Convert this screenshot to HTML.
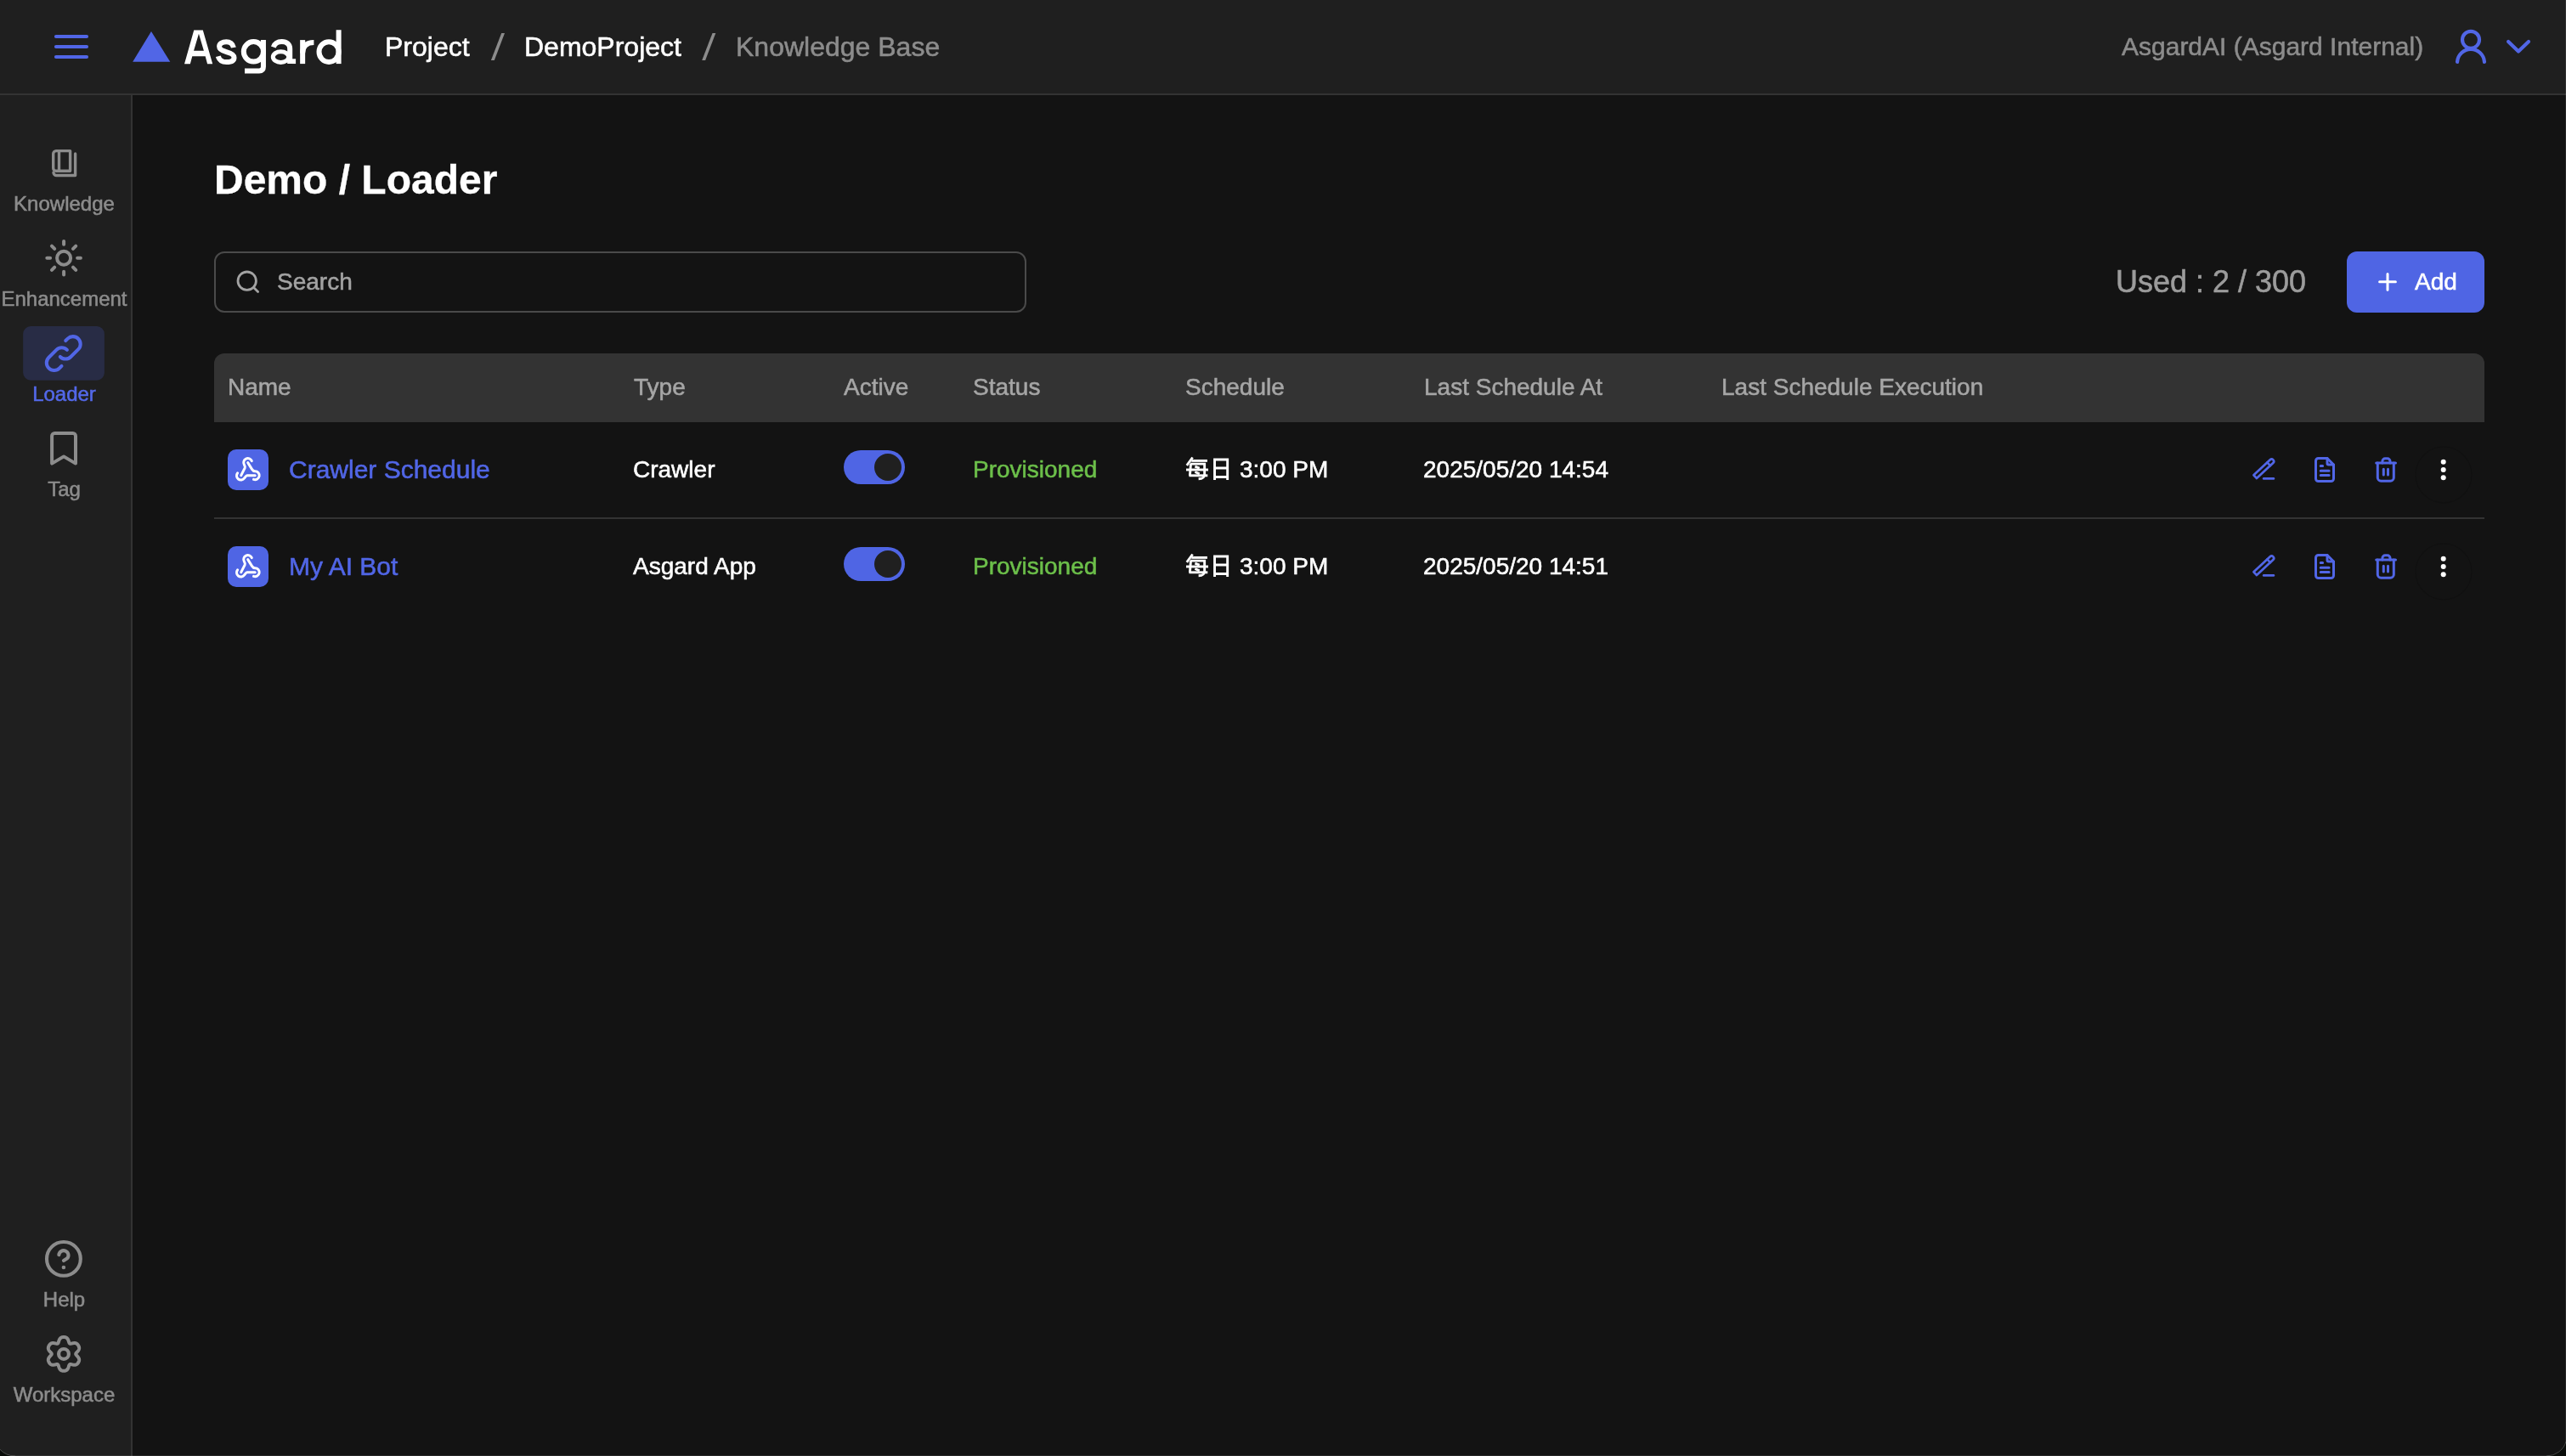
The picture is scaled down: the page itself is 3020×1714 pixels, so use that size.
<!DOCTYPE html>
<html>
<head>
<meta charset="utf-8">
<style>
html,body{margin:0;padding:0;}
body{width:3020px;height:1714px;position:relative;overflow:hidden;background:#131313;font-family:"Liberation Sans",sans-serif;}
.t{position:absolute;white-space:pre;line-height:1;will-change:transform;-webkit-text-stroke-width:0.55px;}
#hdr{position:absolute;left:0;top:0;width:3020px;height:110px;background:#1f1f1f;border-bottom:2px solid #333;}
#side{position:absolute;left:0;top:112px;width:154px;height:1602px;background:#1f1f1f;border-right:2px solid #333;}
#ic{position:absolute;left:0;top:0;width:3020px;height:1714px;}
</style>
</head>
<body>
<div id="hdr"></div>
<div id="side"></div>

<!-- header text -->
<div class="t" style="left:453px;top:39px;font-size:32px;color:#fff;">Project</div>
<div class="t" style="left:617px;top:39px;font-size:32px;color:#fff;">DemoProject</div>
<div class="t" style="left:866px;top:39px;font-size:32px;color:#8c8c8c;">Knowledge Base</div>
<div class="t" style="left:2497px;top:40px;font-size:30px;color:#8c8c8c;">AsgardAI (Asgard Internal)</div>

<!-- sidebar labels -->
<div class="t" style="left:0;width:151px;text-align:center;top:228px;font-size:24px;color:#8c8c8c;">Knowledge</div>
<div class="t" style="left:0;width:151px;text-align:center;top:340px;font-size:24px;color:#8c8c8c;">Enhancement</div>
<div class="t" style="left:0;width:151px;text-align:center;top:452px;font-size:24px;color:#5368e8;">Loader</div>
<div class="t" style="left:0;width:151px;text-align:center;top:564px;font-size:24px;color:#8c8c8c;">Tag</div>
<div class="t" style="left:0;width:151px;text-align:center;top:1518px;font-size:24px;color:#8c8c8c;">Help</div>
<div class="t" style="left:0;width:151px;text-align:center;top:1630px;font-size:24px;color:#8c8c8c;">Workspace</div>

<!-- main -->
<div class="t" style="left:252px;top:188px;font-size:48px;font-weight:700;color:#fff;-webkit-text-stroke-width:0.3px;">Demo / Loader</div>
<div style="position:absolute;left:252px;top:296px;width:952px;height:68px;border:2px solid #4a4a4a;border-radius:12px;"></div>
<div class="t" style="left:326px;top:318px;font-size:28px;color:#a3a3a3;">Search</div>
<div class="t" style="left:2490px;top:314px;font-size:36px;color:#9c9c9c;">Used : 2 / 300</div>
<div style="position:absolute;left:2762px;top:296px;width:162px;height:72px;background:#4f65e4;border-radius:12px;"></div>
<div class="t" style="left:2842px;top:318px;font-size:28px;color:#fff;">Add</div>

<!-- table header -->
<div style="position:absolute;left:252px;top:416px;width:2672px;height:81px;background:#333;border-radius:12px 12px 0 0;"></div>
<div class="t" style="left:268px;top:442px;font-size:28px;color:#a6a6a6;">Name</div>
<div class="t" style="left:746px;top:442px;font-size:28px;color:#a6a6a6;">Type</div>
<div class="t" style="left:993px;top:442px;font-size:28px;color:#a6a6a6;">Active</div>
<div class="t" style="left:1145px;top:442px;font-size:28px;color:#a6a6a6;">Status</div>
<div class="t" style="left:1395px;top:442px;font-size:28px;color:#a6a6a6;">Schedule</div>
<div class="t" style="left:1676px;top:442px;font-size:28px;color:#a6a6a6;">Last Schedule At</div>
<div class="t" style="left:2026px;top:442px;font-size:28px;color:#a6a6a6;">Last Schedule Execution</div>
<div style="position:absolute;left:252px;top:609px;width:2672px;height:2px;background:#333;"></div>

<!-- row 1 -->
<div style="position:absolute;left:268px;top:529px;width:48px;height:48px;background:#4f65e4;border-radius:10px;"></div>
<div class="t" style="left:340px;top:538px;font-size:30px;color:#5166e6;">Crawler Schedule</div>
<div class="t" style="left:745px;top:539px;font-size:28px;color:#fff;">Crawler</div>
<div style="position:absolute;left:993px;top:530px;width:72px;height:40px;background:#4f65e4;border-radius:20px;"></div>
<div style="position:absolute;left:1029px;top:534px;width:32px;height:32px;background:#202020;border-radius:16px;"></div>
<div class="t" style="left:1145px;top:539px;font-size:28px;color:#6cbf4a;">Provisioned</div>
<div class="t" style="left:1459px;top:539px;font-size:28px;color:#fff;">3:00 PM</div>
<div class="t" style="left:1675px;top:539px;font-size:28px;color:#fff;">2025/05/20 14:54</div>

<!-- row 2 -->
<div style="position:absolute;left:268px;top:643px;width:48px;height:48px;background:#4f65e4;border-radius:10px;"></div>
<div class="t" style="left:340px;top:652px;font-size:30px;color:#5166e6;">My AI Bot</div>
<div class="t" style="left:745px;top:653px;font-size:28px;color:#fff;">Asgard App</div>
<div style="position:absolute;left:993px;top:644px;width:72px;height:40px;background:#4f65e4;border-radius:20px;"></div>
<div style="position:absolute;left:1029px;top:648px;width:32px;height:32px;background:#202020;border-radius:16px;"></div>
<div class="t" style="left:1145px;top:653px;font-size:28px;color:#6cbf4a;">Provisioned</div>
<div class="t" style="left:1459px;top:653px;font-size:28px;color:#fff;">3:00 PM</div>
<div class="t" style="left:1675px;top:653px;font-size:28px;color:#fff;">2025/05/20 14:51</div>

<svg id="ic" width="3020" height="1714" viewBox="0 0 3020 1714" fill="none" stroke-linecap="round" stroke-linejoin="round">

<path d="M590.2 39.1H594L581.8 70.9H577.9Z" fill="#8c8c8c"/>
<path d="M838.5 39.1H842.3L830.1 70.9H826.2Z" fill="#8c8c8c"/>
<!-- logo text -->
<g fill="#fff">
<path fill-rule="evenodd" d="M217.03 75.26L228.25 35.47H238.8L250.23 75.26H244.07L241.66 66.25H226.27L223.85 75.26ZM233.96 39.65L228.03 59.66H239.9Z"/>
<rect x="344" y="69.3" width="4.1" height="5.75"/>
</g>
<g stroke="#fff" stroke-width="6" fill="none" stroke-linecap="butt" stroke-linejoin="round">
<path d="M274.9 56C274 51.5 270.5 49.2 266.4 49.2C261.5 49.2 258.1 51.6 258.1 54.8C258.1 58.6 261.8 59.9 266.4 61.1C271.8 62.5 275.5 64 275.5 67.8C275.5 71.5 271.6 73.1 266.6 73.1C261.6 73.1 258 70.6 256.8 66.2"/>
<ellipse cx="298.4" cy="60.85" rx="11.6" ry="11.75"/>
<path d="M309.95 47.1V78.5Q309.95 83.4 305 83.4H288"/>
<path d="M321.8 55.6C323.3 51.3 327 49.1 331.6 49.1C337.6 49.1 341.2 52.3 341.2 57.6V75.1"/>
<ellipse cx="330.5" cy="67.1" rx="9.2" ry="6.3" stroke-width="5"/>
<path d="M356.15 75.1V47.1"/>
<path d="M356.15 62.5C356.15 54.5 360.5 50 369.4 50" />
<ellipse cx="387.05" cy="61.07" rx="11.55" ry="11.9"/>
<path d="M398.6 35.25V75.1"/>
</g>
<!-- hamburger -->
<g stroke="#5166e6" stroke-width="4.2">
<path d="M66 43H102M66 55H102M66 67H102"/>
</g>
<!-- logo triangle -->
<path d="M178 37L200.3 72.8H156.2Z" fill="#5166e6"/>
<!-- user -->
<g stroke="#5166e6" stroke-width="4.2">
<circle cx="2908" cy="46.8" r="10"/>
<path d="M2892 73A16.03 16.03 0 0 1 2924 73"/>
<path d="M2952.1 48.9L2964 60.5L2976 48.9"/>
</g>
<!-- sidebar: book -->
<g stroke="#8c8c8c" stroke-width="3.4">
<path d="M66 177.6H82.6V201.3H66A3.3 3.3 0 0 1 62.7 198V181A3.4 3.4 0 0 1 66 177.6Z"/>
<path d="M69.5 177.6V201.3"/>
<path d="M88.6 181V206.5H66.5A3.5 3.5 0 0 1 63 203"/>
</g>
<!-- sun -->
<g stroke="#8c8c8c" stroke-width="4">
<circle cx="75.1" cy="303.8" r="8"/>
<path d="M91.10 303.80L94.90 303.80M85.99 314.69L89.24 317.94M75.10 319.80L75.10 323.60M64.21 314.69L60.96 317.94M59.10 303.80L55.30 303.80M64.21 292.91L60.96 289.66M75.10 287.80L75.10 284.00M85.99 292.91L89.24 289.66"/>
</g>
<!-- loader highlight -->
<rect x="27.2" y="384" width="95.7" height="63.7" rx="9" fill="#282c45"/>
<g transform="translate(48.25 389.35) scale(2.217)" stroke="#5166e6" stroke-width="1.82" fill="none"><path d="M13.828 10.172a4 4 0 0 0-5.656 0l-4 4a4 4 0 1 0 5.656 5.656l1.102-1.101m-.758-4.899a4 4 0 0 0 5.656 0l4-4a4 4 0 0 0-5.656-5.656l-1.1 1.1"/></g>
<!-- bookmark -->
<path d="M61.1 545.6V513.3A3.3 3.3 0 0 1 64.4 510H85.7A3.3 3.3 0 0 1 89 513.3V545.6L75.05 537.4Z" stroke="#8c8c8c" stroke-width="4" stroke-linejoin="round"/>
<!-- help -->
<g stroke="#8c8c8c" stroke-width="4.1">
<circle cx="74.9" cy="1481.9" r="19.9"/>
<path d="M69.32 1477.2A5.6 5.6 0 1 1 79.19 1481.3L74.9 1484"/>
</g>
<circle cx="74.9" cy="1492" r="2.3" fill="#8c8c8c"/>
<!-- gear -->
<g stroke="#8c8c8c" stroke-width="4">
<circle cx="75" cy="1593.9" r="5.9" stroke-width="4.2"/>
<path id="gearp" d="M89.20 1593.90 L89.23 1594.15 L89.30 1594.40 L89.43 1594.66 L89.60 1594.92 L89.81 1595.20 L90.06 1595.48 L90.33 1595.78 L90.62 1596.10 L90.92 1596.42 L91.23 1596.76 L91.53 1597.11 L91.82 1597.48 L92.10 1597.85 L92.35 1598.23 L92.57 1598.61 L92.76 1598.99 L92.91 1599.38 L93.03 1599.76 L93.12 1600.14 L93.16 1600.51 L93.18 1600.88 L93.16 1601.24 L93.11 1601.59 L93.04 1601.93 L92.95 1602.27 L92.83 1602.60 L92.70 1602.92 L92.56 1603.24 L92.40 1603.55 L92.23 1603.85 L92.05 1604.15 L91.87 1604.44 L91.66 1604.72 L91.45 1605.00 L91.22 1605.26 L90.98 1605.51 L90.72 1605.74 L90.43 1605.96 L90.13 1606.15 L89.81 1606.33 L89.46 1606.47 L89.09 1606.59 L88.70 1606.68 L88.29 1606.73 L87.86 1606.76 L87.42 1606.76 L86.97 1606.73 L86.51 1606.68 L86.05 1606.61 L85.59 1606.52 L85.15 1606.43 L84.71 1606.33 L84.29 1606.23 L83.90 1606.15 L83.53 1606.08 L83.18 1606.03 L82.87 1606.02 L82.58 1606.04 L82.33 1606.10 L82.10 1606.20 L81.90 1606.34 L81.72 1606.54 L81.56 1606.77 L81.42 1607.05 L81.28 1607.37 L81.16 1607.73 L81.03 1608.11 L80.91 1608.52 L80.78 1608.95 L80.64 1609.39 L80.48 1609.82 L80.32 1610.26 L80.13 1610.68 L79.93 1611.09 L79.71 1611.47 L79.47 1611.83 L79.21 1612.15 L78.94 1612.45 L78.66 1612.71 L78.36 1612.94 L78.05 1613.13 L77.73 1613.30 L77.40 1613.43 L77.06 1613.54 L76.73 1613.63 L76.38 1613.69 L76.04 1613.74 L75.69 1613.77 L75.35 1613.79 L75.00 1613.80 L74.65 1613.79 L74.31 1613.77 L73.96 1613.74 L73.62 1613.69 L73.27 1613.63 L72.94 1613.54 L72.60 1613.43 L72.27 1613.30 L71.95 1613.13 L71.64 1612.94 L71.34 1612.71 L71.06 1612.45 L70.79 1612.15 L70.53 1611.83 L70.29 1611.47 L70.07 1611.09 L69.87 1610.68 L69.68 1610.26 L69.52 1609.82 L69.36 1609.39 L69.22 1608.95 L69.09 1608.52 L68.97 1608.11 L68.84 1607.73 L68.72 1607.37 L68.58 1607.05 L68.44 1606.77 L68.28 1606.54 L68.10 1606.34 L67.90 1606.20 L67.67 1606.10 L67.42 1606.04 L67.13 1606.02 L66.82 1606.03 L66.47 1606.08 L66.10 1606.15 L65.71 1606.23 L65.29 1606.33 L64.85 1606.43 L64.41 1606.52 L63.95 1606.61 L63.49 1606.68 L63.03 1606.73 L62.58 1606.76 L62.14 1606.76 L61.71 1606.73 L61.30 1606.68 L60.91 1606.59 L60.54 1606.47 L60.19 1606.33 L59.87 1606.15 L59.57 1605.96 L59.28 1605.74 L59.02 1605.51 L58.78 1605.26 L58.55 1605.00 L58.34 1604.72 L58.13 1604.44 L57.95 1604.15 L57.77 1603.85 L57.60 1603.55 L57.44 1603.24 L57.30 1602.92 L57.17 1602.60 L57.05 1602.27 L56.96 1601.93 L56.89 1601.59 L56.84 1601.24 L56.82 1600.88 L56.84 1600.51 L56.88 1600.14 L56.97 1599.76 L57.09 1599.38 L57.24 1598.99 L57.43 1598.61 L57.65 1598.23 L57.90 1597.85 L58.18 1597.48 L58.47 1597.11 L58.77 1596.76 L59.08 1596.42 L59.38 1596.10 L59.67 1595.78 L59.94 1595.48 L60.19 1595.20 L60.40 1594.92 L60.57 1594.66 L60.70 1594.40 L60.77 1594.15 L60.80 1593.90 L60.77 1593.65 L60.70 1593.40 L60.57 1593.14 L60.40 1592.88 L60.19 1592.60 L59.94 1592.32 L59.67 1592.02 L59.38 1591.70 L59.08 1591.38 L58.77 1591.04 L58.47 1590.69 L58.18 1590.32 L57.90 1589.95 L57.65 1589.57 L57.43 1589.19 L57.24 1588.81 L57.09 1588.42 L56.97 1588.04 L56.88 1587.66 L56.84 1587.29 L56.82 1586.92 L56.84 1586.56 L56.89 1586.21 L56.96 1585.87 L57.05 1585.53 L57.17 1585.20 L57.30 1584.88 L57.44 1584.56 L57.60 1584.25 L57.77 1583.95 L57.95 1583.65 L58.13 1583.36 L58.34 1583.08 L58.55 1582.80 L58.78 1582.54 L59.02 1582.29 L59.28 1582.06 L59.57 1581.84 L59.87 1581.65 L60.19 1581.47 L60.54 1581.33 L60.91 1581.21 L61.30 1581.12 L61.71 1581.07 L62.14 1581.04 L62.58 1581.04 L63.03 1581.07 L63.49 1581.12 L63.95 1581.19 L64.41 1581.28 L64.85 1581.37 L65.29 1581.47 L65.71 1581.57 L66.10 1581.65 L66.47 1581.72 L66.82 1581.77 L67.13 1581.78 L67.42 1581.76 L67.67 1581.70 L67.90 1581.60 L68.10 1581.46 L68.28 1581.26 L68.44 1581.03 L68.58 1580.75 L68.72 1580.43 L68.84 1580.07 L68.97 1579.69 L69.09 1579.28 L69.22 1578.85 L69.36 1578.41 L69.52 1577.98 L69.68 1577.54 L69.87 1577.12 L70.07 1576.71 L70.29 1576.33 L70.53 1575.97 L70.79 1575.65 L71.06 1575.35 L71.34 1575.09 L71.64 1574.86 L71.95 1574.67 L72.27 1574.50 L72.60 1574.37 L72.94 1574.26 L73.27 1574.17 L73.62 1574.11 L73.96 1574.06 L74.31 1574.03 L74.65 1574.01 L75.00 1574.00 L75.35 1574.01 L75.69 1574.03 L76.04 1574.06 L76.38 1574.11 L76.73 1574.17 L77.06 1574.26 L77.40 1574.37 L77.73 1574.50 L78.05 1574.67 L78.36 1574.86 L78.66 1575.09 L78.94 1575.35 L79.21 1575.65 L79.47 1575.97 L79.71 1576.33 L79.93 1576.71 L80.13 1577.12 L80.32 1577.54 L80.48 1577.98 L80.64 1578.41 L80.78 1578.85 L80.91 1579.28 L81.03 1579.69 L81.16 1580.07 L81.28 1580.43 L81.42 1580.75 L81.56 1581.03 L81.72 1581.26 L81.90 1581.46 L82.10 1581.60 L82.33 1581.70 L82.58 1581.76 L82.87 1581.78 L83.18 1581.77 L83.53 1581.72 L83.90 1581.65 L84.29 1581.57 L84.71 1581.47 L85.15 1581.37 L85.59 1581.28 L86.05 1581.19 L86.51 1581.12 L86.97 1581.07 L87.42 1581.04 L87.86 1581.04 L88.29 1581.07 L88.70 1581.12 L89.09 1581.21 L89.46 1581.33 L89.81 1581.47 L90.13 1581.65 L90.43 1581.84 L90.72 1582.06 L90.98 1582.29 L91.22 1582.54 L91.45 1582.80 L91.66 1583.08 L91.87 1583.36 L92.05 1583.65 L92.23 1583.95 L92.40 1584.25 L92.56 1584.56 L92.70 1584.88 L92.83 1585.20 L92.95 1585.53 L93.04 1585.87 L93.11 1586.21 L93.16 1586.56 L93.18 1586.92 L93.16 1587.29 L93.12 1587.66 L93.03 1588.04 L92.91 1588.42 L92.76 1588.81 L92.57 1589.19 L92.35 1589.57 L92.10 1589.95 L91.82 1590.32 L91.53 1590.69 L91.23 1591.04 L90.92 1591.38 L90.62 1591.70 L90.33 1592.02 L90.06 1592.32 L89.81 1592.60 L89.60 1592.88 L89.43 1593.14 L89.30 1593.40 L89.23 1593.65Z"/>
</g>
<g transform="translate(0 0)" stroke="#fff" stroke-width="2.9" stroke-linecap="butt" stroke-linejoin="miter" fill="none">
<path d="M1403.6 538.5L1396.8 547.9"/>
<path d="M1402.3 542.4H1420.9"/>
<path d="M1400.96 546.1H1417.66V558.5C1417.6 561.5 1416.5 563.6 1410.6 563.8"/>
<path d="M1401.48 546.1L1400.4 559.8"/>
<path d="M1396 553H1422"/>
<path d="M1399.4 559.8H1421.3"/>
<path d="M1406.4 549.2L1411.7 551.1M1406.4 555.5L1411.7 557.8"/>
<path d="M1429.54 564.9V541H1444.67V564.9"/>
<path d="M1429.54 551.05H1444.67M1429.54 561.5H1444.67"/>
</g>
<g transform="translate(0 114)" stroke="#fff" stroke-width="2.9" stroke-linecap="butt" stroke-linejoin="miter" fill="none">
<path d="M1403.6 538.5L1396.8 547.9"/>
<path d="M1402.3 542.4H1420.9"/>
<path d="M1400.96 546.1H1417.66V558.5C1417.6 561.5 1416.5 563.6 1410.6 563.8"/>
<path d="M1401.48 546.1L1400.4 559.8"/>
<path d="M1396 553H1422"/>
<path d="M1399.4 559.8H1421.3"/>
<path d="M1406.4 549.2L1411.7 551.1M1406.4 555.5L1411.7 557.8"/>
<path d="M1429.54 564.9V541H1444.67V564.9"/>
<path d="M1429.54 551.05H1444.67M1429.54 561.5H1444.67"/>
</g>
<circle cx="2876" cy="559" r="33" stroke="rgba(0,0,0,0.12)" stroke-width="1.5" fill="none"/>
<circle cx="2876" cy="673" r="33" stroke="rgba(0,0,0,0.12)" stroke-width="1.5" fill="none"/>
<!-- search icon -->
<g stroke="#a3a3a3" stroke-width="2.8">
<circle cx="290.7" cy="330.7" r="10.7"/>
<path d="M298.6 338.6L303.6 343.6"/>
</g>
<!-- add plus -->
<path d="M2810 322.5V341.2M2800.6 331.8H2819.4" stroke="#fff" stroke-width="3"/>

<!-- row 1 -->
<g transform="translate(268 529)" stroke="#fff" stroke-width="3" fill="none">
<path d="M11.65 27.83A5 5 0 1 0 19.58 33.91C20.54 32.76 21.5 30.7 22.77 30.7H32.2"/>
<path d="M23.7 15.6L28.5 23.4C29.24 24.59 30.8 25.7 32.2 25.7A5 5 0 1 1 30.49 35.4"/>
<path d="M28.32 13.69A5 5 0 1 0 19.37 18.1C20.12 19.4 20.72 20.72 20.2 21.8L15.75 30.7"/>
</g>
<g stroke="#5166e6" fill="none">
<g transform="translate(2663.85 552.15) rotate(-43)" stroke-width="2.7"><path d="M-13.2 -2.6H13.2A2.6 2.6 0 0 1 13.2 2.6H-13.2Z"/><path d="M8.6 -2.6V2.6"/></g>
<path d="M2664.2 563.4H2675.9" stroke-width="2.7"/>
</g>
<g transform="translate(2718 535) scale(1.5)" stroke="#5166e6" stroke-width="2" fill="none">
<path d="M14 3v4a1 1 0 0 0 1 1h4"/>
<path d="M17 21h-10a2 2 0 0 1 -2 -2v-14a2 2 0 0 1 2 -2h7l5 5v11a2 2 0 0 1 -2 2z"/>
<path d="M8.8 9h1.6M8.8 12.9h6.6M8.8 16.4h6.6"/>
</g>
<g stroke="#5166e6" stroke-width="3" fill="none">
<path d="M2796.7 545H2819.5"/>
<path d="M2798.3 545V562.2A4 4 0 0 0 2802.3 566.2H2813.3A4 4 0 0 0 2817.3 562.2V545"/>
<path d="M2803.9 545V543A3.2 3.2 0 0 1 2807.1 539.8H2809.8A3.2 3.2 0 0 1 2813 543V545"/>
<path d="M2805.3 552.3V559M2810.5 552.3V559"/>
</g>
<g fill="#fff">
<circle cx="2875.7" cy="543.7" r="3"/>
<circle cx="2875.7" cy="553" r="3"/>
<circle cx="2875.7" cy="562.3" r="3"/>
</g>

<!-- row 2 -->
<g transform="translate(268 643)" stroke="#fff" stroke-width="3" fill="none">
<path d="M11.65 27.83A5 5 0 1 0 19.58 33.91C20.54 32.76 21.5 30.7 22.77 30.7H32.2"/>
<path d="M23.7 15.6L28.5 23.4C29.24 24.59 30.8 25.7 32.2 25.7A5 5 0 1 1 30.49 35.4"/>
<path d="M28.32 13.69A5 5 0 1 0 19.37 18.1C20.12 19.4 20.72 20.72 20.2 21.8L15.75 30.7"/>
</g>
<g stroke="#5166e6" fill="none">
<g transform="translate(2663.85 666.15) rotate(-43)" stroke-width="2.7"><path d="M-13.2 -2.6H13.2A2.6 2.6 0 0 1 13.2 2.6H-13.2Z"/><path d="M8.6 -2.6V2.6"/></g>
<path d="M2664.2 677.4H2675.9" stroke-width="2.7"/>
</g>
<g transform="translate(2718 649) scale(1.5)" stroke="#5166e6" stroke-width="2" fill="none">
<path d="M14 3v4a1 1 0 0 0 1 1h4"/>
<path d="M17 21h-10a2 2 0 0 1 -2 -2v-14a2 2 0 0 1 2 -2h7l5 5v11a2 2 0 0 1 -2 2z"/>
<path d="M8.8 9h1.6M8.8 12.9h6.6M8.8 16.4h6.6"/>
</g>
<g stroke="#5166e6" stroke-width="3" fill="none">
<path d="M2796.7 659H2819.5"/>
<path d="M2798.3 659V676.2A4 4 0 0 0 2802.3 680.2H2813.3A4 4 0 0 0 2817.3 676.2V659"/>
<path d="M2803.9 659V657A3.2 3.2 0 0 1 2807.1 653.8H2809.8A3.2 3.2 0 0 1 2813 657V659"/>
<path d="M2805.3 666.3V673M2810.5 666.3V673"/>
</g>
<g fill="#fff">
<circle cx="2875.7" cy="657.7" r="3"/>
<circle cx="2875.7" cy="667" r="3"/>
<circle cx="2875.7" cy="676.3" r="3"/>
</g>

<!-- window edges -->
<rect x="3019" y="0" width="1" height="1714" fill="rgba(255,255,255,0.09)"/>
<rect x="0" y="1713" width="3019" height="1" fill="rgba(255,255,255,0.09)"/>
<path d="M3020 1697.3V1714H2997.5A23.5 23.5 0 0 0 3020 1697.3Z" fill="#0a0d0a"/>
<path d="M2997.5 1714A23.5 23.5 0 0 0 3020 1697.3" stroke="rgba(255,255,255,0.22)" stroke-width="1"/>
<path d="M0 1706.3V1714H17.4A23.5 23.5 0 0 1 0 1706.3Z" fill="#0a0d0a"/>
<path d="M17.4 1714A23.5 23.5 0 0 1 0 1706.3" stroke="rgba(255,255,255,0.22)" stroke-width="1"/>
</svg>
</body>
</html>
